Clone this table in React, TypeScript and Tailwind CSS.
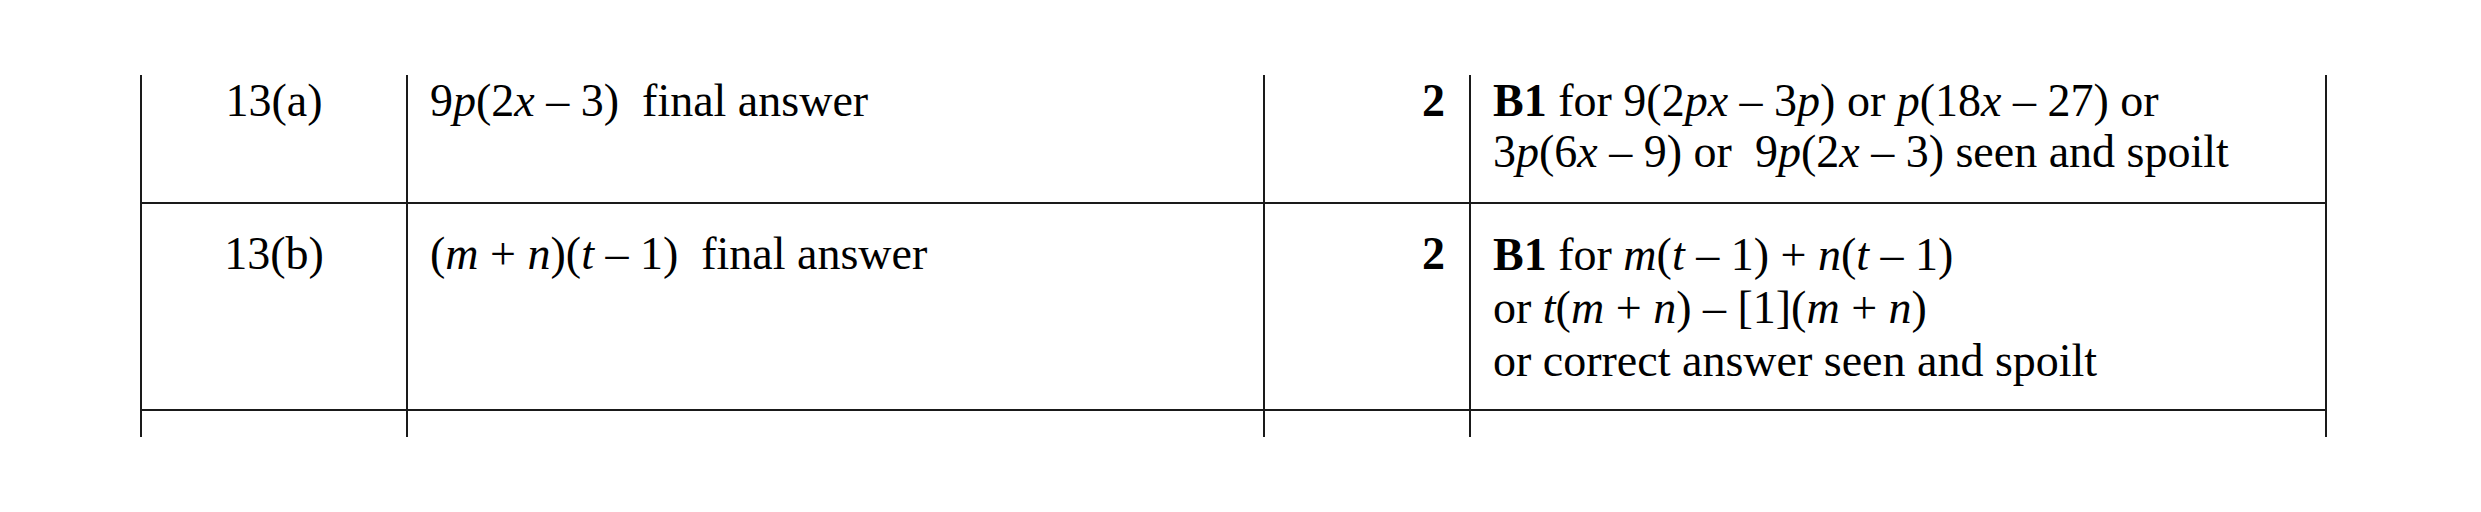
const serif = "font-['Liberation_Serif','Times_New_Roman',serif]"

function I({ children }: { children: React.ReactNode }) {
  return <span className="italic">{children}</span>
}

const cell = "border-l-2 border-[#1a1a1a]"

export default function App() {
  return (
    <div className={`w-full h-[512px] bg-white text-black ${serif} text-[46px] leading-[52px]`}>
      <div className="pt-[75px] pl-[140px]">
        <div className="grid grid-cols-[266px_857px_206px_858px]">
          {/* ── Row 13(a) ── */}
          <div className={`${cell} h-[129px] border-b-2 text-center`}>13(a)</div>
          <div className={`${cell} h-[129px] border-b-2 pl-[22px]`}>
            9<I>p</I>(2<I>x</I> – 3)&nbsp; final answer
          </div>
          <div className={`${cell} h-[129px] border-b-2 pr-6 text-right font-bold`}>2</div>
          <div className={`${cell} h-[129px] border-b-2 border-r-2 pl-[22px] leading-[51px]`}>
            <span className="font-bold">B1</span> for 9(2<I>px</I> – 3<I>p</I>) or <I>p</I>(18<I>x</I> – 27) or
            <br />
            3<I>p</I>(6<I>x</I> – 9) or&nbsp; 9<I>p</I>(2<I>x</I> – 3) seen and spoilt
          </div>

          {/* ── Row 13(b) ── */}
          <div className={`${cell} h-[207px] border-b-2 pt-6 text-center`}>13(b)</div>
          <div className={`${cell} h-[207px] border-b-2 pt-6 pl-[22px]`}>
            (<I>m</I> + <I>n</I>)(<I>t</I> – 1)&nbsp; final answer
          </div>
          <div className={`${cell} h-[207px] border-b-2 pt-6 pr-6 text-right font-bold`}>2</div>
          <div className={`${cell} h-[207px] border-b-2 border-r-2 pt-6 pl-[22px] leading-[53px]`}>
            <span className="font-bold">B1</span> for <I>m</I>(<I>t</I> – 1) + <I>n</I>(<I>t</I> – 1)
            <br />
            or <I>t</I>(<I>m</I> + <I>n</I>) – [1](<I>m</I> + <I>n</I>)
            <br />
            or correct answer seen and spoilt
          </div>

          {/* ── next row (cut off) ── */}
          <div className={`${cell} h-[26px]`} />
          <div className={`${cell} h-[26px]`} />
          <div className={`${cell} h-[26px]`} />
          <div className={`${cell} h-[26px] border-r-2`} />
        </div>
      </div>
    </div>
  )
}
